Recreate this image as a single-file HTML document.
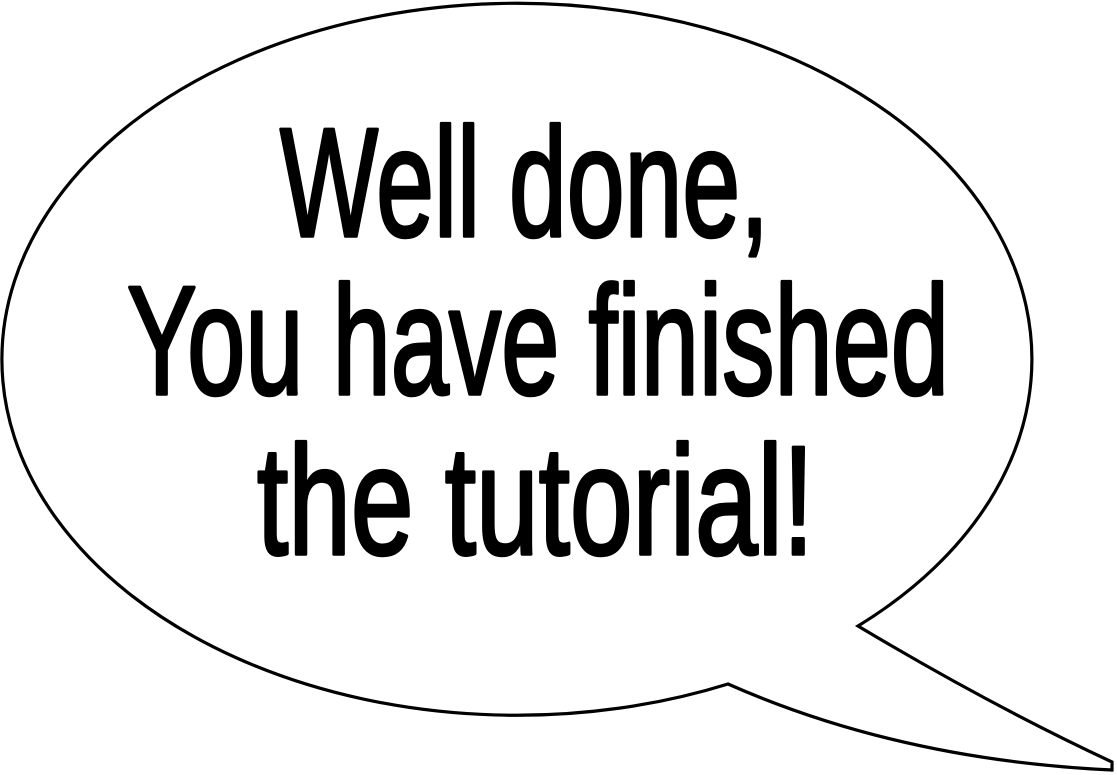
<!DOCTYPE html>
<html><head><meta charset="utf-8"><style>
html,body{margin:0;padding:0;background:#fff;width:1117px;height:775px;overflow:hidden}
svg{display:block}
text{font-family:"Liberation Sans Narrow","Liberation Sans",sans-serif;font-size:155px;fill:#000;stroke:#000;stroke-width:3.5;stroke-linejoin:round}
</style></head><body>
<svg width="1117" height="775" viewBox="0 0 1117 775">
<path d="M858,626 Q990,705 1112,762 L1112,770 Q900,760 728,684 A515,356 0 1 1 858,626 Z" fill="#fff" stroke="#000" stroke-width="3.2" stroke-linejoin="miter"/>
<text x="280" y="236" textLength="489" lengthAdjust="spacingAndGlyphs">Well done,</text>
<text x="127" y="394" textLength="822" lengthAdjust="spacingAndGlyphs">You have finished</text>
<text x="257" y="554" textLength="557" lengthAdjust="spacingAndGlyphs">the tutorial!</text>
</svg>
</body></html>
